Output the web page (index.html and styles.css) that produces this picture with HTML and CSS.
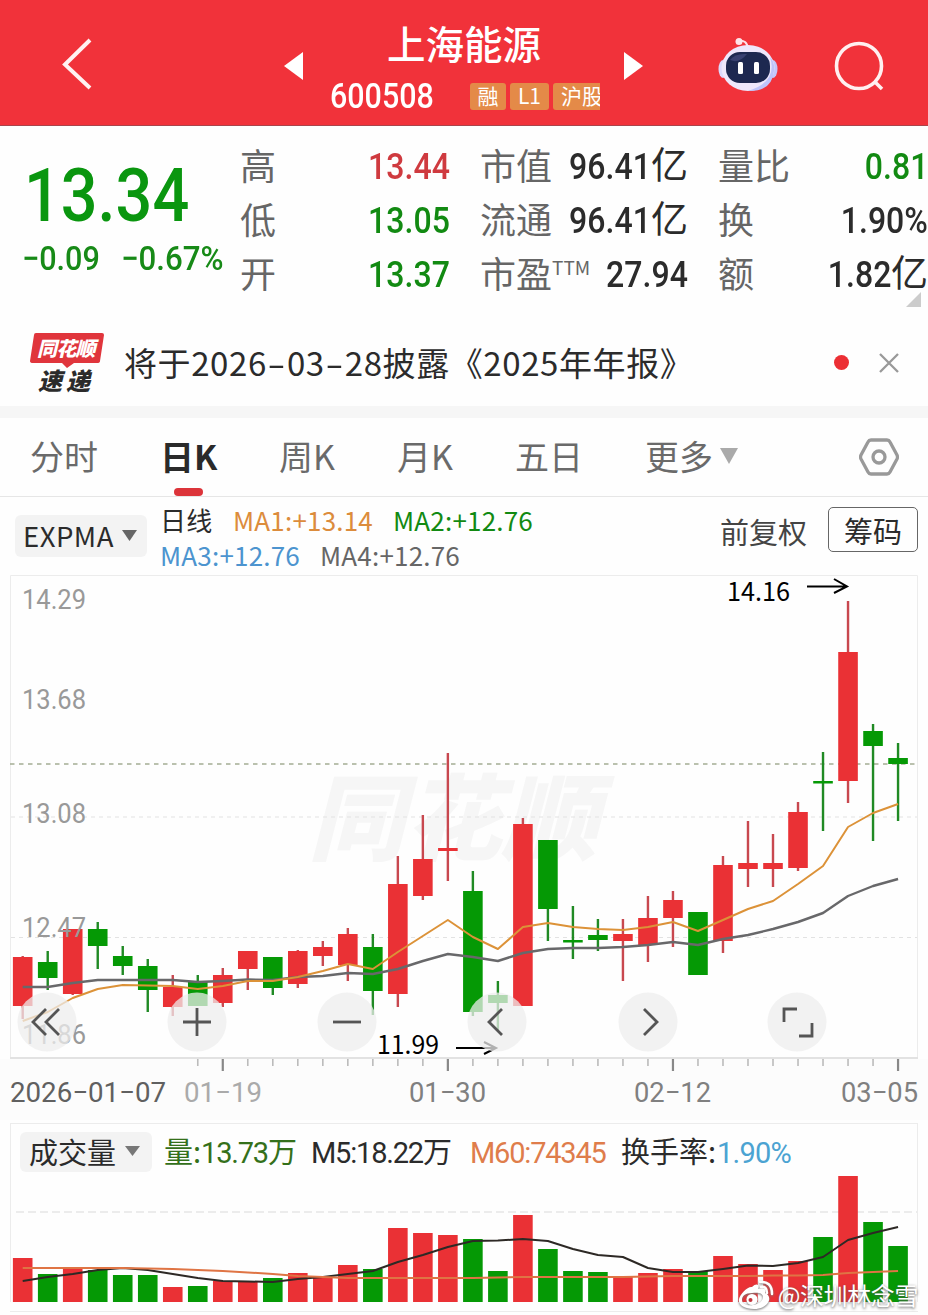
FILE: index.html
```html
<!DOCTYPE html>
<html lang="zh-CN">
<head>
  <meta charset="UTF-8">
  <meta name="viewport" content="width=device-width, initial-scale=1.0">
  <title>上海能源 600508</title>
  <link rel="stylesheet" href="styles.css">
</head>
<body>
  <header class="topbar">
    <svg class="back" width="32" height="54" viewBox="0 0 32 54"><path d="M29 3 4 27.500 29 51"/></svg>
    <svg class="prev" width="20" height="30" viewBox="0 0 20 30"><path d="M0 15 19 1v28z"/></svg>
    <div class="stock">
      <h1>上海能源</h1>
      <div class="code-row">
        <span class="code"><span>600508</span></span>
        <span class="tags"><i>融</i><i>L1</i><i class="cut">沪股</i></span>
      </div>
    </div>
    <svg class="next" width="20" height="30" viewBox="0 0 20 30"><path d="M20 15 1 1v28z"/></svg>
    <svg class="robot" width="60" height="56" viewBox="0 0 60 56">
      <path d="M20 4q9-2 10 8" fill="none" stroke="#ffe0e8" stroke-width="2"/>
      <circle cx="21" cy="4.500" r="3.500" fill="#ffe3e8"/>
      <ellipse cx="5" cy="32" rx="4.500" ry="9" fill="#dcd8fb"/>
      <ellipse cx="55" cy="32" rx="4.500" ry="9" fill="#c4c7fb"/>
      <ellipse cx="30" cy="31" rx="26.500" ry="23" fill="#eee7fb"/>
      <path d="M52 20q8 25-22 34 24 1 26-20 1-9-4-14z" fill="#bfc4fa"/>
      <rect x="8" y="15" width="44" height="31" rx="14" fill="#1d2850"/>
      <path d="M12 23q5-7 17-6-8 10-17 6z" fill="#384070"/>
      <rect x="20" y="25" width="5" height="12" rx="1.500" fill="#fff"/>
      <rect x="36" y="25" width="5" height="12" rx="1.500" fill="#fff"/>
    </svg>
    <svg class="search" width="52" height="52" viewBox="0 0 52 52"><circle cx="25" cy="25" r="22.500"/><path d="m41 41 7 7"/></svg>
  </header>

  <section class="quote">
    <div class="price">
      <div class="last"><span>13.34</span></div>
      <div class="change"><span>−0.09</span><span>−0.67%</span></div>
    </div>
    <dl class="col col-a">
      <div><dt>高</dt><dd class="red"><span>13.44</span></dd></div>
      <div><dt>低</dt><dd class="green"><span>13.05</span></dd></div>
      <div><dt>开</dt><dd class="green"><span>13.37</span></dd></div>
    </dl>
    <dl class="col col-b">
      <div><dt>市值</dt><dd><span>96.41</span><b>亿</b></dd></div>
      <div><dt>流通</dt><dd><span>96.41</span><b>亿</b></dd></div>
      <div><dt>市盈<sup>TTM</sup></dt><dd><span>27.94</span></dd></div>
    </dl>
    <dl class="col col-c">
      <div><dt>量比</dt><dd class="green"><span>0.81</span></dd></div>
      <div><dt>换</dt><dd><span>1.90%</span></dd></div>
      <div><dt>额</dt><dd><span>1.82</span><b>亿</b></dd></div>
    </dl>
    <svg class="corner" width="15" height="15" viewBox="0 0 15 15"><path d="M15 0v15H0z" fill="#ccc"/></svg>
  </section>

  <section class="notice">
    <div class="express">
      <svg width="76" height="42" viewBox="0 0 76 42"><path d="M6 0h66q2 0 2 2l-4 26q0 2-3 2H44l-7 5-5-5H3q-3 0-3-2L4 2q0-2 2-2z" fill="#e0353c"/></svg>
      <span class="brand">同花顺</span>
      <span class="sub">速递</span>
    </div>
    <p>将于2026<i>-</i>03<i>-</i>28披露《2025年年报》</p>
    <span class="dot"></span>
    <svg class="close" width="22" height="22" viewBox="0 0 22 22"><path d="m2 2 18 18M20 2 2 20"/></svg>
  </section>

  <nav class="tabs">
    <a>分时</a>
    <a class="active">日K</a>
    <a>周K</a>
    <a>月K</a>
    <a>五日</a>
    <a>更多<svg width="18" height="16" viewBox="0 0 18 16"><path d="M0 0h18L9 16z" fill="#aaa"/></svg></a>
    <svg class="setting" width="40" height="38" viewBox="0 0 40 38"><path d="M12 2h16q2 0 3 2l7 13q1 2 0 4l-7 13q-1 2-3 2H12q-2 0-3-2L2 21q-1-2 0-4L9 4q1-2 3-2z"/><circle cx="20" cy="19" r="6"/></svg>
  </nav>

  <section class="indicator">
    <button class="picker expma">EXPMA<svg width="15" height="11" viewBox="0 0 15 11"><path d="M0 0h15L7.500 11z" fill="#666"/></svg></button>
    <div class="ma">
      <div><span class="day">日线</span><span class="orange">MA1:+13.14</span><span class="green">MA2:+12.76</span></div>
      <div><span class="blue">MA3:+12.76</span><span class="grey">MA4:+12.76</span></div>
    </div>
    <span class="adjust">前复权</span>
    <button class="chips">筹码</button>
  </section>

  <svg id="kline" class="kline" width="928" height="545" viewBox="0 575 928 545"></svg>

  <section class="volume">
    <div class="legend">
      <button class="picker">成交量<svg width="15" height="10" viewBox="0 0 15 10"><path d="M0 0h15L7.500 10z" fill="#777"/></svg></button>
      <span class="v1">量:<em>13.73</em>万</span>
      <span class="v2"><em>M5:18.22</em>万</span>
      <span class="v3"><em>M60:74345</em></span>
      <span class="v4">换手率:<em>1.90%</em></span>
    </div>
    <svg id="vol" width="928" height="142" viewBox="0 1173 928 142"></svg>
    <div class="author">
      <svg width="36" height="32" viewBox="0 0 36 32">
        <path fill="#fff" fill-rule="evenodd" d="M14 8c4-4 8-3 6 2 6-2 9 0 7 4 9 4 3 16-11 16C6 30 0 26 1 20 2 15 10 7 14 8zM14 14C7 14 4 17 4 21s5 6 11 5 10-4 10-8-5-5-11-4z"/>
        <circle cx="14" cy="20.500" r="5.500" fill="#fff"/>
        <circle cx="12.500" cy="21" r="2" fill="#c4333a"/>
        <path d="M23 8q6-1 6 6M22 3q12-1 12 12" fill="none" stroke="#fff" stroke-width="2.500" stroke-linecap="round"/>
      </svg>
      <span>@深圳林念雪</span>
    </div>
  </section>

  <script src="script.js"></script>
</body>
</html>
```

FILE: styles.css
```css
* {
  margin: 0;
  padding: 0;
  box-sizing: border-box;
}
body {
  width: 928px;
  height: 1315px;
  overflow: hidden;
  background: #fefefe;
  color: #2b2b2b;
  font-family: "Noto Sans CJK SC", sans-serif;
}
svg {
  display: block;
  flex: none;
}
button {
  border: none;
  font-family: inherit;
  color: inherit;
}
i, em {
  font-style: normal;
}
.red { color: #cf3a3f; }
.green { color: #128a12; }
.orange { color: #dc8c3c; }
.blue { color: #4c94cf; }
.grey { color: #666; }

/* header */
.topbar {
  display: flex;
  height: 126px;
  background: #f1323a;
  border-bottom: 1px solid #a9454c;
  color: #fff;
}
.topbar .back {
  margin: 37px 0 0 61px;
  fill: none;
  stroke: #fff2f2;
  stroke-width: 4;
}
.prev, .next {
  margin-top: 51px;
  fill: #fff;
}
.prev { margin-left: 191px; }
.stock {
  width: 293px;
  margin-left: 26px;
  padding-top: 13px;
}
.stock h1 {
  width: 268px;
  text-align: center;
  font-size: 38.500px;
  font-weight: 500;
  line-height: 58px;
}
.code-row {
  display: flex;
  height: 44px;
  margin-top: 4px;
}
.code {
  width: 140px;
  font: 500 35px/44px Roboto, sans-serif;
}
.code span {
  display: inline-block;
  transform: scaleX(0.87);
  transform-origin: 0 0;
}
.tags {
  display: flex;
  gap: 4px;
  padding-top: 8px;
}
.tags i {
  width: 36px;
  height: 27px;
  border-radius: 3px;
  background: #e48a48;
  font-size: 21px;
  line-height: 25px;
  text-align: center;
}
.tags i:nth-child(2) { width: 39px; }
.tags .cut {
  width: 47px;
  padding-left: 8px;
  overflow: hidden;
  white-space: nowrap;
  text-align: left;
  border-radius: 3px 0 0 3px;
}
.robot { margin: 37px 0 0 75px; }
.search {
  margin: 41px 0 0 56px;
  fill: none;
  stroke: #fff0f0;
  stroke-width: 3.600;
}

/* quote */
.quote {
  position: relative;
  display: flex;
  height: 196px;
  padding-top: 14px;
}
.price {
  width: 240px;
  padding-left: 22px;
  color: #0a960f;
}
.last {
  height: 92px;
  padding: 17px 0 0 2px;
  font: 500 74px/78px Roboto, sans-serif;
}
.last span {
  display: inline-block;
  transform: scaleX(0.875);
  transform-origin: 0 0;
}
.change {
  display: flex;
  justify-content: space-between;
  width: 202px;
  padding-top: 5px;
  font: 500 34px/42px Roboto, sans-serif;
  color: #178a17;
}
.change span {
  transform: scaleX(0.9);
  transform-origin: 0 0;
}
.change span:last-child {
  transform: scaleX(0.92);
  transform-origin: 100% 0;
}
.col > div {
  display: flex;
  justify-content: space-between;
  height: 54px;
  line-height: 48px;
}
.col dt {
  font-size: 36px;
  color: #666;
  white-space: nowrap;
}
.col dd {
  font: 500 36px/54px Roboto, sans-serif;
  white-space: nowrap;
}
.col dd span {
  display: inline-block;
  transform: scaleX(0.89);
  transform-origin: 100% 0;
}
.col dd b {
  font: 400 37px/40px "Noto Sans CJK SC", sans-serif;
}
.col sup {
  font-size: 19px;
  line-height: 0;
  vertical-align: 13px;
}
.col-a { width: 210px; }
.col-b { width: 208px; margin-left: 30px; }
.col-c { width: 210px; margin-left: 30px; }
.corner {
  position: absolute;
  right: 7px;
  top: 166px;
}

/* notice */
.notice {
  display: flex;
  height: 96px;
  padding-top: 11px;
  border-bottom: 12px solid #f6f6f6;
}
.express {
  position: relative;
  width: 95px;
  padding-left: 30px;
}
.express .brand, .express .sub {
  position: absolute;
  font-weight: 900;
  font-style: italic;
  white-space: nowrap;
}
.express .brand {
  left: 37px;
  top: 1px;
  color: #fff;
  font-size: 20px;
  line-height: 28px;
  letter-spacing: -0.800px;
}
.express .sub {
  left: 38px;
  top: 32px;
  font-size: 24px;
  line-height: 30px;
  letter-spacing: 4px;
}
.notice p {
  width: 708px;
  margin-left: 29px;
  font-size: 33px;
  line-height: 58px;
  letter-spacing: 0.600px;
}
.notice p i {
  display: inline-block;
  width: 20px;
  text-align: center;
  transform: scaleX(1.6);
}
.dot {
  width: 15px;
  height: 15px;
  margin: 22px 0 0 2px;
  border-radius: 50%;
  background: #ec2f34;
}
.close {
  margin: 19px 0 0 29px;
  fill: none;
  stroke: #999;
  stroke-width: 2.300;
}

/* tabs */
.tabs {
  display: flex;
  height: 79px;
  padding-left: 30px;
  border-bottom: 1px solid #e6e6e6;
  font-size: 34px;
  line-height: 75px;
  color: #6a6a6a;
}
.tabs a {
  width: 118px;
  white-space: nowrap;
}
.tabs a:nth-child(1) { width: 130px; }
.tabs a:nth-child(2) { width: 119px; }
.tabs a:nth-child(5) { width: 130px; }
.tabs a:nth-child(6) {
  display: flex;
  width: 214px;
}
.tabs a svg { margin: 30px 0 0 7px; }
.tabs .active {
  position: relative;
  font-weight: 700;
  color: #2a2a2a;
}
.tabs .active::after {
  content: "";
  position: absolute;
  left: 14px;
  bottom: 0;
  width: 29px;
  height: 8px;
  border-radius: 4px;
  background: #dc343a;
}
.setting {
  margin-top: 20px;
  fill: none;
  stroke: #999;
  stroke-width: 3.300;
}

/* indicator bar */
.indicator {
  display: flex;
  height: 78px;
}
.picker {
  display: flex;
  align-items: center;
  border-radius: 6px;
  background: #f3f3f3;
}
.expma {
  width: 132px;
  height: 42px;
  margin: 18px 0 0 15px;
  padding: 0 0 2px 8px;
  font-size: 27.500px;
  letter-spacing: 0.500px;
  gap: 8px;
}
.ma {
  width: 553px;
  padding: 5px 0 0 13px;
  font-size: 26px;
  line-height: 35px;
}
.ma div { display: flex; }
.ma span {
  width: 160px;
  letter-spacing: 0.200px;
}
.ma .day { width: 73px; }
.adjust {
  width: 108px;
  margin-left: 20px;
  font-size: 29px;
  line-height: 68px;
  color: #444;
}
.adjust + .chips {
  width: 90px;
  height: 45px;
  margin-top: 10px;
  border: 1.500px solid #666;
  border-radius: 5px;
  background: none;
  font-size: 29px;
  line-height: 40px;
}

/* volume */
.volume {
  position: relative;
  height: 195px;
}
.legend {
  display: flex;
  height: 50px;
  margin: 3px 10px 0;
  border: 1px solid #ececec;
  border-bottom: none;
  font-size: 29px;
  line-height: 53px;
  white-space: nowrap;
}
.legend .picker {
  width: 132px;
  height: 40px;
  margin: 8px 12px 0 9px;
  padding: 0 0 2px 9px;
  gap: 9px;
  font-size: 29px;
}
.legend em {
  font-family: Roboto, sans-serif;
  letter-spacing: -1.200px;
}
.v1 { width: 147px; color: #34701a; }
.v2 { width: 159px; }
.v3 { width: 151px; color: #df7d4b; }
.v4 em { padding-left: 1px; letter-spacing: -0.800px; color: #4ba3d2; }
.author {
  position: absolute;
  right: 10px;
  bottom: 7px;
  display: flex;
  gap: 4px;
  color: #fff;
  font-size: 24px;
  line-height: 27px;
  letter-spacing: -0.400px;
  text-shadow: 0 1px 3px #555;
}
.author svg {
  margin-top: -2px;
  filter: drop-shadow(0 1px 1px #777);
}

/* chart text */
.kline { overflow: visible; }
.scale { font: 400 28px Roboto, sans-serif; fill: #999; }
.mark { font: 400 25px "Noto Sans CJK SC", sans-serif; fill: #000; }
.brand-mark { font: italic 900 94px "Noto Sans CJK SC", sans-serif; fill: #f6f6f6; }
```

FILE: script.js
```js
// high, body top, body bottom, low, volume top, up/down
const days = [
  [956, 957, 1006, 1019, 1258, 'r'], [951, 962, 978, 990, 1274, 'g'],
  [929, 929, 994, 995, 1269, 'r'], [922, 929, 946, 969, 1270, 'g'],
  [946, 956, 966, 975, 1275, 'g'], [959, 966, 990, 1012, 1275, 'g'],
  [975, 987, 1007, 1016, 1287, 'r'], [975, 981, 1006, 1006, 1286, 'g'],
  [968, 975, 1003, 1007, 1281, 'r'], [951, 951, 969, 990, 1282, 'r'],
  [957, 957, 988, 995, 1278, 'g'], [950, 951, 984, 988, 1273, 'r'],
  [941, 947, 956, 966, 1277, 'r'], [928, 934, 965, 981, 1265, 'r'],
  [934, 947, 991, 1015, 1269, 'g'], [856, 884, 994, 1007, 1228, 'r'],
  [815, 859, 896, 900, 1233, 'r'], [753, 848, 851, 881, 1235, 'r'],
  [871, 891, 1012, 1016, 1239, 'g'], [981, 995, 1003, 1030, 1271, 'g'],
  [818, 824, 1006, 1006, 1215, 'r'], [840, 840, 909, 941, 1249, 'g'],
  [906, 940, 942.5, 959, 1271, 'g'], [919, 935, 940, 951, 1272, 'g'],
  [919, 934, 941, 981, 1277, 'r'], [896, 918, 945, 962, 1273, 'r'],
  [891, 900, 918, 947, 1269, 'r'], [912, 912, 975, 975, 1271, 'g'],
  [856, 865, 941, 953, 1256, 'r'], [821, 863, 869, 887, 1264, 'r'],
  [834, 863, 869, 887, 1270, 'r'], [802, 812, 868, 871, 1261, 'r'],
  [752, 781, 783.5, 831, 1237, 'g'], [601, 652, 781, 803, 1176, 'r'],
  [724, 731, 746, 841, 1222, 'g'], [743, 758, 764, 821, 1246, 'g']
];
const ma1 = [1021, 1012, 998, 989, 985, 985.5, 986, 989, 986, 981, 981, 977, 971, 964, 969, 952, 936, 920, 937, 949, 927, 923, 927, 929, 930, 927, 922, 931, 920, 909, 901, 884, 866, 827, 813, 804];
const ma4 = [987, 987, 983, 980, 980, 980, 980, 982, 981, 979.5, 980, 977, 976, 973, 974, 969, 961, 954, 957, 961, 953, 949, 948, 948, 947, 945, 942, 945, 939, 935, 929, 922, 913, 896, 886, 879];
const m5 = [1281, 1277, 1274, 1270, 1268, 1270, 1274, 1278, 1281, 1281.5, 1282, 1279, 1277, 1274, 1271, 1262, 1255, 1247, 1241, 1240.5, 1239, 1241, 1249, 1255, 1257, 1268, 1272, 1272, 1269, 1265.5, 1266, 1263, 1257, 1240, 1233, 1227];
const m60 = [1268, 1268, 1268, 1268, 1268, 1268.5, 1269, 1270, 1271, 1272.5, 1274, 1276, 1277, 1278, 1278, 1278, 1278, 1278, 1278, 1277.5, 1277, 1277, 1277, 1277, 1277, 1276.5, 1276, 1276, 1276, 1276, 1275.5, 1275.5, 1275, 1273, 1272, 1271];

const colors = { r: '#ea3135', g: '#059905' };
const wicks = { r: '#c8484f', g: '#208a24' };
const x = i => 22.7 + i * 25.01;

function rect(cx, top, width, bottom, fill) {
  return `<rect x="${cx - width / 2}" y="${top}" width="${width}" height="${bottom - top}" fill="${fill}"/>`;
}

function line(values, color, width) {
  const points = values.map((y, i) => `${x(i)},${y}`).join(' ');
  return `<polyline points="${points}" fill="none" stroke="${color}" stroke-width="${width}" stroke-linejoin="round"/>`;
}

function text(str, left, base, width, cls, extra = '') {
  return `<text class="${cls}" x="${left}" y="${base}" textLength="${width}" lengthAdjust="spacingAndGlyphs" ${extra}>${str}</text>`;
}

function stroke(d, color, width, extra = '') {
  return `<path d="${d}" fill="none" stroke="${color}" stroke-width="${width}" ${extra}/>`;
}

function drawKline() {
  let out = text('同花顺', 308, 853, 290, 'brand-mark');
  out += '<rect x="0" y="1059" width="928" height="61" fill="#fcfcfc"/>';
  out += stroke('M10.500 1058V575.500H917.500V1058', '#ececec', 1);
  out += stroke('M10 1058H918', '#e2e2e2', 2);
  out += stroke('M11 817H917M11 937.500H917', '#e2e2e2', 1, 'stroke-dasharray="4 4"');
  out += stroke('M10 764H917', '#a4ad94', 1.6, 'stroke-dasharray="4.500 4.500"');

  days.forEach(([high, top, bottom, low, , c], i) => {
    out += rect(x(i), high, 2.4, low, wicks[c]);
    out += rect(x(i), top, 19.6, bottom, colors[c]);
  });
  out += line(ma4, '#68686a', 2.4);
  out += line(ma1, '#dc9238', 2);

  [['14.29', 609], ['13.68', 709], ['13.08', 823], ['12.47', 937], ['11.86', 1044]].forEach(([s, y]) => {
    out += text(s, 22, y, 64, 'scale');
  });
  out += text('14.16', 727, 601, 63, 'mark') + stroke('M807 586.500H847M834 579 847 586.500 834 593', '#000', 2);
  out += text('11.99', 377, 1054, 62, 'mark') + stroke('M456 1048H496M484 1042 496 1048 484 1054', '#000', 2);

  const icons = [
    [47, 'M-1-13-14 0-1 13M12-13-1 0 12 13'],
    [197, 'M-14 0H14M0-14V14'],
    [347, 'M-14 0H14'],
    [497, 'M5-13-8 0 5 13'],
    [648, 'M-4-13 9 0-4 13'],
    [797, 'M-13 0V-13H0M2 14H15V1']
  ];
  icons.forEach(([cx, d]) => {
    out += `<g transform="translate(${cx} 1022)"><circle r="29.500" fill="#eee" fill-opacity=".74"/>${stroke(d, '#555', 2.8)}</g>`;
  });

  for (let i = 7; i < 36; i++) {
    const major = [8, 17, 26, 35].includes(i);
    out += rect(x(i), 1059, major ? 2.2 : 1.6, major ? 1071 : 1066, major ? '#888' : '#bbb');
  }
  out += text('2026−01−07', 10, 1102, 156, 'scale', 'style="fill:#606060"');
  out += text('01−19', 184, 1102, 78, 'scale', 'style="fill:#aaa"');
  out += text('01−30', 409, 1102, 77, 'scale', 'style="fill:#808080"');
  out += text('02−12', 634, 1102, 77, 'scale', 'style="fill:#808080"');
  out += text('03−05', 841, 1102, 77, 'scale', 'style="fill:#808080"');
  document.getElementById('kline').innerHTML = out;
}

function drawVolume() {
  let out = stroke('M10.500 1173V1302M917.500 1173V1302M10 1311.500H918', '#ececec', 1);
  out += stroke('M16 1212H917', '#e6e6e6', 1.5, 'stroke-dasharray="8 4"');
  days.forEach((d, i) => {
    out += rect(x(i), d[4], 19.6, 1302, colors[d[5]]);
  });
  out += line(m5, '#2d2925', 2);
  out += line(m60, '#df7444', 2);
  document.getElementById('vol').innerHTML = out;
}

drawKline();
drawVolume();
```
